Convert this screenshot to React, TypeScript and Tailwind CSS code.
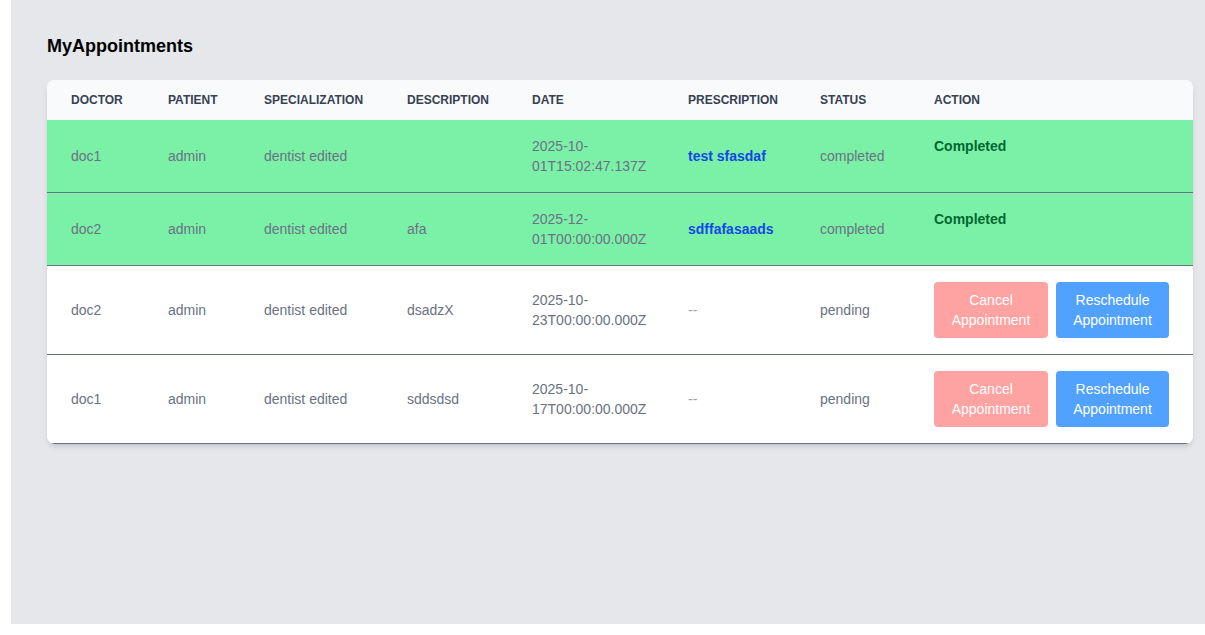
import React from "react";

type Appointment = {
  doctor: string;
  patient: string;
  specialization: string;
  description: string;
  date: string;
  prescription: string;
  status: "completed" | "pending";
};

const appointments: Appointment[] = [
  {
    doctor: "doc1",
    patient: "admin",
    specialization: "dentist edited",
    description: "",
    date: "2025-10-01T15:02:47.137Z",
    prescription: "test sfasdaf",
    status: "completed",
  },
  {
    doctor: "doc2",
    patient: "admin",
    specialization: "dentist edited",
    description: "afa",
    date: "2025-12-01T00:00:00.000Z",
    prescription: "sdffafasaads",
    status: "completed",
  },
  {
    doctor: "doc2",
    patient: "admin",
    specialization: "dentist edited",
    description: "dsadzX",
    date: "2025-10-23T00:00:00.000Z",
    prescription: "",
    status: "pending",
  },
  {
    doctor: "doc1",
    patient: "admin",
    specialization: "dentist edited",
    description: "sddsdsd",
    date: "2025-10-17T00:00:00.000Z",
    prescription: "",
    status: "pending",
  },
];

const HeaderCell = ({
  className = "",
  children,
}: {
  className?: string;
  children: React.ReactNode;
}) => (
  <th
    className={`px-6 py-3 text-left text-xs font-bold uppercase text-gray-700 ${className}`}
  >
    {children}
  </th>
);

const AppointmentRow = ({ appt }: { appt: Appointment }) => {
  const done = appt.status === "completed";

  return (
    <tr
      className={`border-b border-gray-500 ${done ? "bg-green-300" : "bg-white"}`}
    >
      <td className="px-6 py-4 text-sm text-gray-500">{appt.doctor}</td>
      <td className="px-6 py-4 text-sm text-gray-500">{appt.patient}</td>
      <td className="px-6 py-4 text-sm text-gray-500">
        {appt.specialization}
      </td>
      <td className="px-6 py-4 text-sm text-gray-500">{appt.description}</td>
      <td className="px-6 py-4 text-sm text-gray-500">{appt.date}</td>
      <td className="px-6 py-4 text-sm">
        {appt.prescription ? (
          <span className="font-semibold text-blue-700">
            {appt.prescription}
          </span>
        ) : (
          <span className="text-gray-400">--</span>
        )}
      </td>
      <td className="px-6 py-4 text-sm text-gray-500">{appt.status}</td>
      <td className={`px-6 py-4 text-sm ${done ? "align-top" : ""}`}>
        {done ? (
          <span className="font-bold text-green-800">Completed</span>
        ) : (
          <div className="flex gap-2">
            <button className="w-[114px] rounded bg-red-300 px-4 py-2 text-white">
              Cancel Appointment
            </button>
            <button className="w-[113px] rounded bg-blue-400 px-4 py-2 text-white">
              Reschedule Appointment
            </button>
          </div>
        )}
      </td>
    </tr>
  );
};

// The page scrolls both ways: the table is wider than the window.
const App = () => (
  <div className="h-screen w-screen overflow-auto bg-white font-['Segoe_UI','Liberation_Sans',sans-serif] [scrollbar-color:#8a8a8a_#fafafa]">
    <div className="flex w-max">
      <div className="w-[11px] shrink-0 bg-white" />
      <main className="h-[624px] bg-gray-200 px-9 pt-8">
        <h1 className="mb-5 text-lg font-semibold text-black">
          MyAppointments
        </h1>
        <div className="overflow-hidden rounded-lg bg-white shadow-md">
          <table className="w-[1146px] table-fixed border-collapse">
            <thead className="bg-gray-50">
              <tr>
                <HeaderCell className="w-[97px]">Doctor</HeaderCell>
                <HeaderCell className="w-[96px]">Patient</HeaderCell>
                <HeaderCell className="w-[143px]">Specialization</HeaderCell>
                <HeaderCell className="w-[125px]">Description</HeaderCell>
                <HeaderCell className="w-[156px]">Date</HeaderCell>
                <HeaderCell className="w-[132px]">Prescription</HeaderCell>
                <HeaderCell className="w-[114px]">Status</HeaderCell>
                <HeaderCell className="w-[283px]">Action</HeaderCell>
              </tr>
            </thead>
            <tbody>
              {appointments.map((appt, i) => (
                <AppointmentRow key={i} appt={appt} />
              ))}
            </tbody>
          </table>
        </div>
      </main>
    </div>
    <div className="h-[40px]" />
  </div>
);

export default App;
